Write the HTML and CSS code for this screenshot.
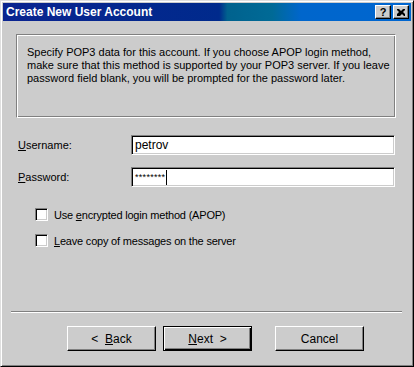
FILE: index.html
```html
<!doctype html>
<html>
<head>
    <title>Create New User Account</title>
    <link rel="stylesheet" href="styles.css">
</head>
<body>
    <div class="window">
        <div class="titlebar">
            <span class="title">Create New User Account</span>
            <div class="title-buttons">
                <span class="tb-button help-button">?</span>
                <span class="tb-button">
                    <svg width="8" height="7" viewBox="0 0 8 7">
                        <path d="M0 0h2l2 2 2-2h2v1l-2 2 2 2v2h-1l-2-2-2 2H0V5l2-2-2-2z" fill="#000"/>
                    </svg>
                </span>
            </div>
        </div>
        <div class="dialog">
            <div class="info">
                Specify POP3 data for this account. If you choose APOP login method,<br>
                make sure that this method is supported by your POP3 server. If you leave<br>
                password field blank, you will be prompted for the password later.
            </div>

            <div class="fields">
                <div class="field">
                    <label for="username"><u>U</u>sername:</label>
                    <div class="edit" id="username">petrov</div>
                </div>
                <div class="field">
                    <label for="password"><u>P</u>assword:</label>
                    <div class="edit" id="password"><span class="stars">********</span><span class="caret"></span></div>
                </div>
            </div>

            <div class="options">
                <div class="option">
                    <span class="checkbox"></span>
                    <span>Use <u>e</u>ncrypted login method (APOP)</span>
                </div>
                <div class="option">
                    <span class="checkbox"></span>
                    <span><u>L</u>eave copy of messages on the server</span>
                </div>
            </div>

            <div class="separator"></div>

            <div class="buttons">
                <button class="btn">&lt;&nbsp;&nbsp;<u>B</u>ack</button>
                <button class="btn btn-default"><u>N</u>ext&nbsp;&nbsp;&gt;</button>
                <button class="btn btn-cancel">Cancel</button>
            </div>
        </div>
    </div>
</body>
</html>
```

FILE: styles.css
```css
body {
    margin: 0;
    background-color: #cccccc;
    font-family: 'Liberation Sans', Arial, sans-serif;
    font-size: 11px;
    color: #000000;
}
.window {
    width: 414px;
    height: 367px;
    box-sizing: border-box;
    background-color: #cccccc;
    border: 1px solid;
    border-color: #dfdfdf #000000 #000000 #dfdfdf;
    box-shadow: inset 1px 1px 0 #ffffff, inset -1px -1px 0 #808080;
    padding: 2px;
    display: flex;
    flex-direction: column;
}
.titlebar {
    height: 18px;
    display: flex;
    align-items: center;
    justify-content: space-between;
    padding: 0 2px 0 3px;
    background: linear-gradient(to right, #0a2490 0%, #002a8c 53%, #00628e 55%, #006a96 66%, #0066cc 73%, #0066d0 100%);
}
.title {
    color: #ffffff;
    font-weight: bold;
    font-size: 12px;
}
.title-buttons {
    display: flex;
    gap: 2px;
}
.tb-button {
    width: 16px;
    height: 14px;
    box-sizing: border-box;
    background-color: #cccccc;
    border: 1px solid;
    border-color: #ffffff #000000 #000000 #ffffff;
    box-shadow: inset -1px -1px 0 #808080;
    display: flex;
    align-items: center;
    justify-content: center;
}
.help-button {
    font-weight: bold;
    font-size: 11px;
    line-height: 12px;
}
.dialog {
    flex: 1;
    display: flex;
    flex-direction: column;
    padding: 13px 0 0 0;
}
.info {
    margin-left: 13px;
    width: 380px;
    height: 84px;
    box-sizing: border-box;
    border: 1px solid;
    border-color: #808080 #ffffff #ffffff #808080;
    box-shadow: inset 1px 1px 0 #ffffff, inset -1px -1px 0 #808080;
    padding: 11px 10px;
    line-height: 13px;
    white-space: nowrap;
}
.fields {
    display: flex;
    flex-direction: column;
    gap: 12px;
    margin-top: 17px;
    padding-left: 15px;
}
.field {
    display: flex;
    align-items: center;
    height: 20px;
}
.field label {
    width: 113px;
}
.edit {
    width: 264px;
    height: 20px;
    box-sizing: border-box;
    background-color: #ffffff;
    border: 1px solid;
    border-color: #808080 #ffffff #ffffff #808080;
    box-shadow: inset 1px 1px 0 #000000, inset -1px -1px 0 #cccccc;
    padding: 0 3px;
    display: flex;
    align-items: center;
    font-size: 12px;
}
.stars {
    font-size: 9px;
    letter-spacing: 0.3px;
}
.caret {
    width: 1px;
    height: 15px;
    background-color: #000000;
    margin-left: 1px;
}
.options {
    display: flex;
    flex-direction: column;
    gap: 13px;
    margin-top: 21px;
    padding-left: 32px;
}
.option {
    display: flex;
    align-items: center;
    gap: 6px;
    height: 13px;
    letter-spacing: -0.2px;
}
.checkbox {
    width: 13px;
    height: 13px;
    box-sizing: border-box;
    background-color: #ffffff;
    border: 1px solid;
    border-color: #808080 #ffffff #ffffff #808080;
    box-shadow: inset 1px 1px 0 #000000, inset -1px -1px 0 #cccccc;
}
.separator {
    margin: 64px 9px 0 8px;
    border-top: 1px solid #808080;
    border-bottom: 1px solid #ffffff;
    height: 0;
}
.buttons {
    display: flex;
    margin-top: 13px;
    padding-left: 64px;
}
.btn {
    width: 89px;
    height: 25px;
    box-sizing: border-box;
    background-color: #cccccc;
    border: 1px solid;
    border-color: #ffffff #000000 #000000 #ffffff;
    box-shadow: inset -1px -1px 0 #808080;
    font-family: 'Liberation Sans', Arial, sans-serif;
    font-size: 12px;
    color: #000000;
    padding: 0;
}
.btn-default {
    margin-left: 7px;
    border: 1px solid #000000;
    box-shadow: inset 1px 1px 0 #ffffff, inset -1px -1px 0 #000000, inset -2px -2px 0 #808080;
}
.btn-cancel {
    margin-left: 23px;
}
```
